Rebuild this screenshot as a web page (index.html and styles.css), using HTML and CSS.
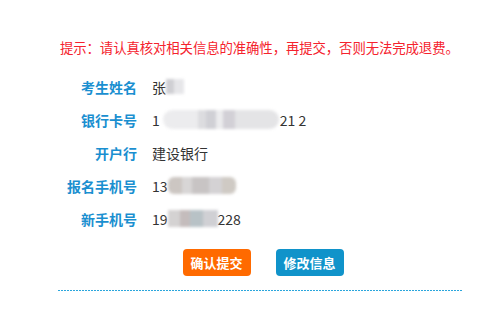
FILE: index.html
```html
<!DOCTYPE html>
<html>
<head>
<meta charset="utf-8">
<link rel="stylesheet" href="styles.css">
</head>
<body>
<div class="wrap">
  <p class="tip">提示：请认真核对相关信息的准确性，再提交，否则无法完成退费。</p>
  <div class="form">
    <div class="label">考生姓名</div>
    <div class="value">张<span class="mask m-name"></span></div>
    <div class="label">银行卡号</div>
    <div class="value">1<span class="mask m-card"></span>21 2</div>
    <div class="label">开户行</div>
    <div class="value">建设银行</div>
    <div class="label">报名手机号</div>
    <div class="value">13<span class="mask m-ph1"></span></div>
    <div class="label">新手机号</div>
    <div class="value">19<span class="mask m-ph2"></span>228</div>
  </div>
  <div class="actions">
    <button class="btn btn-orange">确认提交</button>
    <button class="btn btn-blue">修改信息</button>
  </div>
  <div class="divider"></div>
</div>
</body>
</html>
```
FILE: styles.css
```css
html, body {
  margin: 0;
  padding: 0;
  background: #ffffff;
}
body {
  font-family: "Noto Sans CJK SC", "Liberation Sans", sans-serif;
  width: 500px;
  height: 320px;
  overflow: hidden;
}
.wrap {
  width: 404px;
  margin-left: 58px;
  padding-top: 37px;
}
.tip {
  margin: 0;
  color: #f5222d;
  font-size: 13.4px;
  line-height: 20px;
  padding-left: 2px;
  letter-spacing: -0.1px;
  white-space: nowrap;
}
.form {
  margin-top: 13px;
  display: grid;
  grid-template-columns: 79px auto;
  column-gap: 15px;
  grid-auto-rows: 33px;
  align-items: center;
}
.label {
  text-align: right;
  color: #1a8fd0;
  font-weight: bold;
  font-size: 14px;
}
.value {
  color: #333333;
  font-size: 14px;
  display: flex;
  align-items: center;
}
.mask {
  display: inline-block;
  filter: blur(1.5px);
}
.m-name {
  width: 18px;
  height: 15px;
  background: linear-gradient(90deg, #cfcfd3 0 45%, #e6e6e9 45% 100%);
}
.m-card {
  width: 116px;
  height: 19px;
  border-radius: 10px;
  margin: 0 1px 0 3px;
  background: linear-gradient(90deg, #ececee 0 30%, #dcdcdf 30% 37%, #d0d0d5 37% 46%, #ececee 46% 52%, #d2d0d6 52% 62%, #e4e4e6 62% 100%);
}
.m-ph1 {
  width: 68px;
  height: 17px;
  border-radius: 6px;
  background: linear-gradient(90deg, #ccc6c2 0 20%, #d8d6d6 20% 35%, #c8c4c4 35% 60%, #d4d2d4 60% 80%, #cfcac4 80% 100%);
}
.m-ph2 {
  width: 50px;
  height: 17px;
  background: linear-gradient(90deg, #d4d2d2 0 25%, #c4bcbc 25% 45%, #b8c2c6 45% 70%, #d0d0d4 70% 100%);
}
.actions {
  display: flex;
  justify-content: center;
  gap: 25px;
  margin-top: 14px;
  padding-left: 6px;
}
.btn {
  border: none;
  border-radius: 4px;
  color: #ffffff;
  font-family: "Noto Sans CJK SC", sans-serif;
  font-weight: bold;
  font-size: 13px;
  width: 68px;
  height: 27px;
  padding: 0;
  line-height: 27px;
}
.btn-orange {
  background: #ff6a00;
}
.btn-blue {
  background: #1093ca;
}
.divider {
  margin-top: 14px;
  height: 1px;
  background-image: linear-gradient(90deg, #2ba6dc 0, #2ba6dc 2px, transparent 2px, transparent 3px);
  background-size: 3px 1px;
  background-repeat: repeat-x;
}
```
